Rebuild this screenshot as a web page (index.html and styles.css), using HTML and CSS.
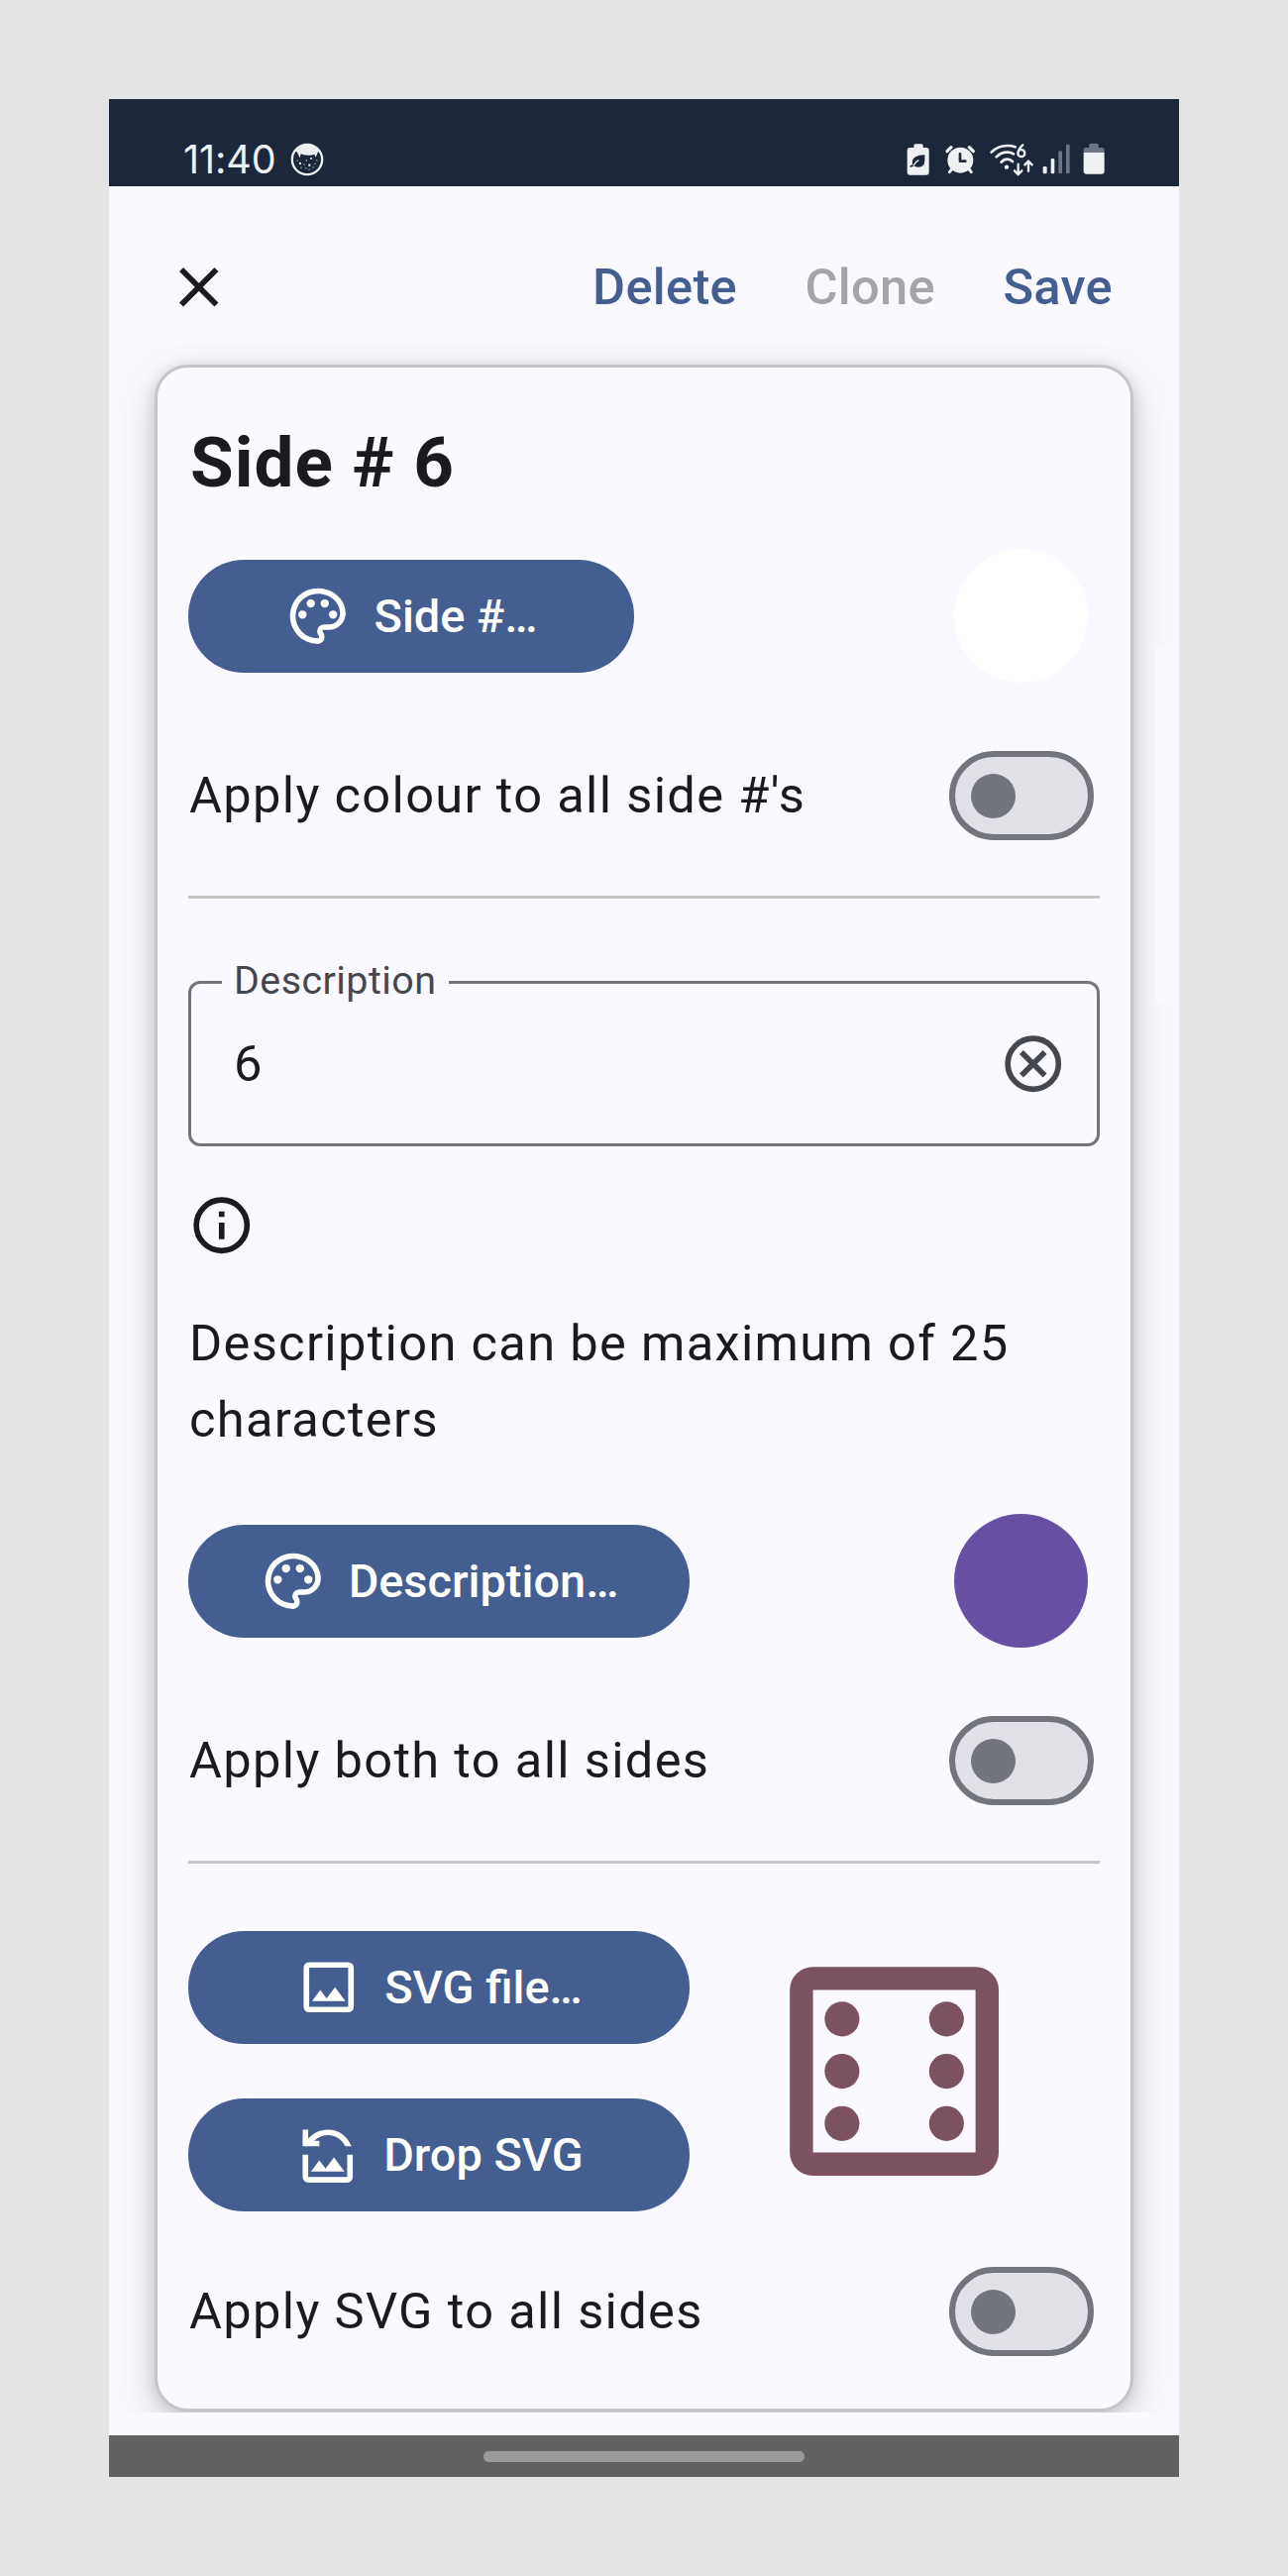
FILE: index.html
```html
<!DOCTYPE html>
<html lang="en">
<head>
<meta charset="utf-8">
<title>Side # 6</title>
<link rel="stylesheet" href="styles.css">
</head>
<body>
<svg width="0" height="0" class="defs">
  <symbol id="palette" viewBox="0 0 24 24"><path d="M12,22A10,10 0 0,1 2,12A10,10 0 0,1 12,2C17.5,2 22,6 22,11A6,6 0 0,1 16,17H14.2C13.9,17 13.7,17.2 13.7,17.5C13.7,17.6 13.8,17.7 13.8,17.8C14.2,18.3 14.4,18.9 14.4,19.5C14.5,20.9 13.4,22 12,22M12,4A8,8 0 0,0 4,12A8,8 0 0,0 12,20C12.3,20 12.5,19.8 12.5,19.5C12.5,19.3 12.4,19.2 12.4,19.1C12,18.6 11.8,18.1 11.8,17.5C11.8,16.1 12.9,15 14.3,15H16A4,4 0 0,0 20,11C20,7.1 16.4,4 12,4M6.5,10A1.5,1.5 0 1,1 6.5,13A1.5,1.5 0 1,1 6.5,10M9.5,6A1.5,1.5 0 1,1 9.5,9A1.5,1.5 0 1,1 9.5,6M14.5,6A1.5,1.5 0 1,1 14.5,9A1.5,1.5 0 1,1 14.5,6M17.5,10A1.5,1.5 0 1,1 17.5,13A1.5,1.5 0 1,1 17.5,10Z"/></symbol>
</svg>
<main class="phone">
  <header class="status">
    <span class="clock">11:40</span>
    <svg class="face" width="34" height="34" viewBox="0 0 102 102">
      <circle cx="51" cy="51" r="45.500" fill="none" stroke="#eef0f2" stroke-width="7"/>
      <path d="M14 26C30 0 72 0 88 26L83 30L77 44L73 35C62 39 42 39 32 34L29 46L20 28Z" fill="#eef0f2"/>
      <g fill="#eef0f2"><circle cx="30" cy="63" r="3.500"/><circle cx="58" cy="68" r="3.500"/><circle cx="63" cy="48" r="3"/><circle cx="49" cy="54" r="2"/><circle cx="75" cy="64" r="2"/></g>
      <g fill="#6d7685"><circle cx="42" cy="66" r="3"/><circle cx="33" cy="76" r="3"/><circle cx="47" cy="77" r="3"/><circle cx="57" cy="81" r="3"/><circle cx="70" cy="74" r="3"/><circle cx="80" cy="53" r="3"/><circle cx="22" cy="54" r="3"/></g>
    </svg>
    <svg class="tray" width="204" height="38" viewBox="100 156 612 114" fill="#eef0f2">
      <path d="M133 166h18q5 0 5 5v6h10q8 0 8 8v66q0 9-9 9h-48q-9 0-9-9v-66q0-8 8-8h12v-6q0-5 5-5z"/>
      <path d="M161 199v17q0 20-20 20-8 0-13-4-4 4-11 5v-6q5 0 7-3-3-13 6-21 9-7 31-8z" fill="#1c273a"/>
      <path d="M127 231q5-11 16-16" fill="none" stroke="#eef0f2" stroke-width="4"/>
      <circle cx="269" cy="215" r="39"/>
      <path d="M229 188l12-12M308 188l-12-12" fill="none" stroke="#eef0f2" stroke-width="10" stroke-linecap="round"/>
      <path d="M245 240l-9 11M293 240l9 11" fill="none" stroke="#eef0f2" stroke-width="9" stroke-linecap="round"/>
      <path d="M268 196v22h16" fill="none" stroke="#1c273a" stroke-width="8" stroke-linecap="round" stroke-linejoin="round"/>
      <g fill="none" stroke="#eef0f2" stroke-width="8" stroke-linecap="round">
        <path d="M363 191q20-20 48-20 13 0 24 4M378 205q14-14 33-14 10 0 19 5M393 221q8-9 18-9 9 0 16 7"/>
        <path d="M458 169q-14 12-14 24M443 194a10.500 10.500 0 1 0 21 0a10.500 10.500 0 1 0-21 0" stroke-width="7"/>
        <path d="M444 227v29M433 247l11 11 11-11M475 248v-28M464 229l11-11 11 11" stroke-width="7"/>
      </g>
      <circle cx="409" cy="236" r="6.500"/>
      <rect x="519" y="234" width="12" height="22" rx="4"/><rect x="543" y="210" width="11" height="46" rx="4"/>
      <g fill="#6d7483"><rect x="566" y="187" width="11" height="69" rx="4"/><rect x="589" y="167" width="11" height="89" rx="4"/><path d="M642 193v-9q0-7 8-7h9v-8q0-5 5-5h18q5 0 5 5v8h10q8 0 8 7v9z"/></g>
      <path d="M642 192h63v56q0 9-9 9h-45q-9 0-9-9z"/>
    </svg>
  </header>

  <nav class="appbar">
    <svg class="icon close" viewBox="0 0 24 24"><path d="M19 6.410L17.590 5 12 10.590 6.410 5 5 6.410 10.590 12 5 17.590 6.410 19 12 13.410 17.590 19 19 17.590 13.410 12z"/></svg>
    <a class="action">Delete</a>
    <a class="action disabled">Clone</a>
    <a class="action">Save</a>
  </nav>

  <div class="scroll">
    <section class="card">
      <h1 class="title">Side # 6</h1>
      <div class="row">
        <button class="btn narrow"><svg class="icon"><use href="#palette"/></svg>Side #…</button>
        <span class="swatch white"></span>
      </div>
      <div class="row toggle-row"><span class="text">Apply colour to all side #'s</span><span class="switch"></span></div>
      <hr class="divider">
      <fieldset class="field">
        <legend class="legend">Description</legend>
        <span class="value">6</span>
        <svg class="icon clear" viewBox="0 0 24 24" fill="none" stroke="#44474f" stroke-width="2"><circle cx="12" cy="12" r="9.100"/><path d="M7.800 7.800l8.400 8.400M16.200 7.800l-8.400 8.400"/></svg>
      </fieldset>
      <svg class="icon info" viewBox="0 0 24 24"><path d="M11 7h2v2h-2zM11 11h2v6h-2z"/><circle cx="12" cy="12" r="9.100" fill="none" stroke="#1a1b20" stroke-width="2"/></svg>
      <p class="hint">Description can be maximum of 25 characters</p>
      <div class="row">
        <button class="btn"><svg class="icon"><use href="#palette"/></svg>Description…</button>
        <span class="swatch purple"></span>
      </div>
      <div class="row toggle-row"><span class="text">Apply both to all sides</span><span class="switch"></span></div>
      <hr class="divider">
      <div class="media">
        <div class="stack">
          <button class="btn"><svg class="icon" viewBox="0 0 24 24"><path fill-rule="evenodd" d="M5 3h14a2 2 0 0 1 2 2v14a2 2 0 0 1-2 2H5a2 2 0 0 1-2-2V5a2 2 0 0 1 2-2zM5 5v14h14V5zM6 17h12l-3.750-5-3 4L9 13z"/></svg>SVG file…</button>
          <button class="btn"><svg class="icon" viewBox="0 0 24 24"><path d="M3 3h2v3.340A9 9 0 0 1 20.490 9H18.320A7 7 0 0 0 7.100 7H9v2H3zM3 12h2v8h14v-8h2v8a2 2 0 0 1-2 2H5a2 2 0 0 1-2-2zM6 18h12l-3.750-5-3 4L9 14z"/></svg>Drop SVG</button>
        </div>
        <svg class="dice" viewBox="0 0 24 24"><path fill-rule="evenodd" d="M5 3h14a2 2 0 0 1 2 2v14a2 2 0 0 1-2 2H5a2 2 0 0 1-2-2V5a2 2 0 0 1 2-2zM5 5v14h14V5z"/><circle cx="7.500" cy="7.500" r="1.500"/><circle cx="7.500" cy="12" r="1.500"/><circle cx="7.500" cy="16.500" r="1.500"/><circle cx="16.500" cy="7.500" r="1.500"/><circle cx="16.500" cy="12" r="1.500"/><circle cx="16.500" cy="16.500" r="1.500"/></svg>
      </div>
      <div class="row toggle-row last"><span class="text">Apply SVG to all sides</span><span class="switch"></span></div>
    </section>
    <span class="thumb"></span>
  </div>

  <footer class="navbar"><span class="pill"></span></footer>
</main>
</body>
</html>
```
FILE: styles.css
```css
* { box-sizing: border-box; }
body {
  margin: 0;
  height: 2600px;
  padding: 100px 110px;
  background: #e4e4e4;
  font-family: Roboto, sans-serif;
  color: #1a1b20;
}
.defs { display: none; }
.phone {
  width: 1080px;
  height: 2400px;
  display: flex;
  flex-direction: column;
  background: #faf9ff;
  overflow: hidden;
}
.status {
  flex: none;
  height: 88px;
  padding: 36px 73px 0 75px;
  display: flex;
  align-items: flex-start;
  background: #1c273a;
  color: #eef0f2;
}
.clock {
  width: 95px;
  margin-top: 5px;
  font: 400 39.500px/40px Inter, sans-serif;
  letter-spacing: -.1px;
  white-space: nowrap;
}
.face { margin: 8px 0 0 13px; }
.tray { margin: 6px 0 0 auto; }
.appbar {
  flex: none;
  height: 160px;
  padding: 44px 67px 0 57px;
  display: flex;
  align-items: center;
}
.icon { flex: none; width: 67.500px; height: 67.500px; fill: currentColor; }
.close { margin-right: auto; }
.action {
  margin-left: 68.500px;
  font-weight: 500;
  font-size: 50.600px;
  line-height: 60px;
  letter-spacing: .3px;
  color: #445e91;
}
.action.disabled { color: #a5a4aa; }
.scroll {
  flex: none;
  height: 2087px;
  padding: 20px 46px 0;
  overflow: hidden;
  position: relative;
}
.card {
  height: 2066px;
  padding: 51px 31px 0;
  border: 3px solid #c5c6c7;
  border-radius: 34px;
  background: #faf9ff;
  box-shadow: 0 12px 40px rgba(0, 0, 0, .19), 0 2px 14px rgba(0, 0, 0, .11);
}
.title {
  margin: 0 0 42px 2px;
  font-size: 71px;
  line-height: 90px;
  letter-spacing: 1px;
  font-weight: 700;
}
.row { display: flex; align-items: center; justify-content: space-between; }
.btn {
  width: 506px;
  height: 114px;
  padding: 0;
  border: 0;
  border-radius: 56.500px;
  display: flex;
  align-items: center;
  justify-content: center;
  gap: 22.500px;
  background: #445e91;
  color: #fff;
  font: 500 46.900px/54px Roboto, sans-serif;
}
.btn.narrow { width: 450px; }
.swatch { width: 135px; height: 135px; margin-right: 12px; border-radius: 50%; }
.white { background: #fff; }
.purple { background: #6750a3; }
.toggle-row { margin-top: 69px; height: 90px; }
.text, .hint { font-size: 50.600px; letter-spacing: 1.320px; }
.text { padding: 0 0 2px 1px; }
.switch {
  width: 146px;
  height: 90px;
  margin-right: 6px;
  border: 6px solid #72757e;
  border-radius: 45px;
  background: #e2e1e7;
  display: flex;
  align-items: center;
  padding-left: 16px;
}
.switch::before { content: ""; width: 45px; height: 45px; border-radius: 50%; background: #72757e; }
.divider { margin: 56px 0 0; border: 0; height: 3px; background: #c5c7c6; }
.field {
  margin: 62px 0 0;
  height: 188px;
  padding: 0 31px;
  border: 3px solid #72757e;
  border-radius: 12px;
  display: flex;
  align-items: flex-start;
  justify-content: space-between;
}
.legend {
  width: 229px;
  height: 45px;
  padding: 0 0 0 12px;
  font-size: 39.400px;
  line-height: 41px;
  letter-spacing: .45px;
  white-space: nowrap;
  color: #44474f;
}
.value { margin: 30px 0 0 12px; font-size: 50.600px; line-height: 60px; }
.clear { margin-top: 26px; fill: none; }
.info { display: block; margin-top: 46px; }
.hint { margin: 46.500px 0 57px; padding: 0 0 0 1px; line-height: 77px; }
.media {
  margin-top: 68px;
  display: flex;
  align-items: center;
}
.stack { display: flex; flex-direction: column; gap: 55px; }
.dice { width: 281.200px; height: 281.200px; margin-left: 66px; fill: #7d5260; }
.last { margin-top: 56px; }
.thumb {
  position: absolute;
  left: 1057px;
  top: 306px;
  width: 12px;
  height: 360px;
  background: #faf9ff;
}
.navbar {
  margin-top: auto;
  height: 42px;
  padding-top: 16px;
  background: #616161;
}
.pill { display: block; width: 324px; height: 11px; margin: 0 auto; border-radius: 5px; background: #9a9a9a; }
```
